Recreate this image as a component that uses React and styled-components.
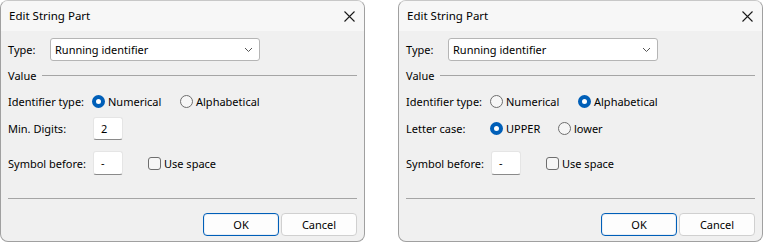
import React from 'react';
import styled, { createGlobalStyle } from 'styled-components';

const GlobalStyle = createGlobalStyle`
  body {
    margin: 0;
    padding: 0;
    background: #ffffff;
    font-family: 'Noto Sans', 'Liberation Sans', sans-serif;
    font-size: 11px;
    color: #000;
  }
`;

const Page = styled.div`
  display: flex;
  gap: 33px;
  width: 763px;
  height: 245px;
`;

const Window = styled.div`
  box-sizing: border-box;
  width: 365px;
  height: 242px;
  border: 1px solid #a0a0a0;
  border-top-color: #c8c8c8;
  border-radius: 8px;
  background: #f0f0f0;
  display: flex;
  flex-direction: column;
  overflow: hidden;
`;

const TitleBar = styled.div`
  height: 30px;
  flex: none;
  display: flex;
  align-items: center;
  justify-content: space-between;
  padding: 0 9px 0 8px;
  background: #f7f7f7;
`;

const Title = styled.span`
  font-size: 11.5px;
  line-height: 16px;
  margin-top: -1px;
`;

const Body = styled.div`
  flex: 1;
  display: flex;
  flex-direction: column;
  padding: 0 6px 0 6px;
`;

const Row = styled.div`
  display: flex;
  align-items: center;
  height: ${p => p.$h || 23}px;
  margin-top: ${p => p.$mt || 0}px;
  white-space: nowrap;
`;

const Label = styled.span`
  width: ${p => p.$w || 84}px;
  flex: none;
  padding-left: 1px;
`;

const Combo = styled.div`
  box-sizing: border-box;
  width: 210px;
  height: 23px;
  background: #fff;
  border: 1px solid #b5b5b5;
  border-radius: 3px;
  display: flex;
  align-items: center;
  justify-content: space-between;
  padding: 0 6px 0 4px;
`;

const GroupHead = styled.div`
  display: flex;
  align-items: center;
  gap: 6px;
  height: 14px;
  margin-top: 7px;
  padding-left: 1px;
  &::after {
    content: '';
    flex: 1;
    height: 1px;
    background: #a5a5a5;
    margin-right: 1px;
  }
`;

const Input = styled.div`
  box-sizing: border-box;
  width: 30px;
  height: ${p => p.$h || 23}px;
  background: #fff;
  border: 1px solid #e5e5e5;
  border-bottom-color: #8a8a8a;
  border-radius: 3px;
  padding: 3px 0 0 7px;
`;

const Choice = styled.label`
  display: flex;
  align-items: center;
  gap: 3px;
  width: ${p => (p.$w ? `${p.$w}px` : 'auto')};
  flex: none;
  margin-left: ${p => p.$ml || 0}px;
`;

const RadioDot = styled.span`
  box-sizing: border-box;
  width: 13px;
  height: 13px;
  border-radius: 50%;
  flex: none;
  background: ${p => (p.$on ? '#fff' : '#f6f6f6')};
  border: ${p => (p.$on ? '4px solid #005fb8' : '1px solid #6e6e6e')};
`;

const Check = styled.span`
  box-sizing: border-box;
  width: 13px;
  height: 13px;
  flex: none;
  border-radius: 3px;
  border: 1px solid #6e6e6e;
  background: #f6f6f6;
`;

const Separator = styled.div`
  height: 1px;
  background: #a5a5a5;
  margin: 23px 1px 0 1px;
`;

const Buttons = styled.div`
  display: flex;
  justify-content: flex-end;
  gap: 2px;
  margin-top: 14px;
  padding-right: 1px;
`;

const Button = styled.div`
  box-sizing: border-box;
  width: 76px;
  height: 23px;
  display: flex;
  align-items: center;
  justify-content: center;
  background: #fdfdfd;
  border-radius: 4px;
  border: 1px solid ${p => (p.$primary ? '#005fb8' : '#d0d0d0')};
  box-shadow: ${p => (p.$primary ? 'inset 0 0 0 1px #e8eef6' : 'none')};
`;

const Close = () => (
  <svg width="11" height="11" viewBox="0 0 11 11">
    <path d="M0.5 0.5 L10.5 10.5 M10.5 0.5 L0.5 10.5" stroke="#1a1a1a" strokeWidth="1.1" fill="none" />
  </svg>
);

const Chevron = () => (
  <svg width="9" height="6" viewBox="0 0 9 6">
    <path d="M1 1 L4.5 4.5 L8 1" stroke="#555" strokeWidth="1" fill="none" />
  </svg>
);

const Radio = ({ on, w, children }) => (
  <Choice $w={w}>
    <RadioDot $on={on} />
    {children}
  </Choice>
);

const Dialog = ({ alphabetical }) => (
  <Window>
    <TitleBar>
      <Title>Edit String Part</Title>
      <Close />
    </TitleBar>
    <Body>
      <Row $mt={7}>
        <Label $w={42}>Type:</Label>
        <Combo>
          <span>Running identifier</span>
          <Chevron />
        </Combo>
      </Row>
      <GroupHead>Value</GroupHead>
      <Row $mt={8}>
        <Label>Identifier type:</Label>
        <Radio on={!alphabetical} w={88}>Numerical</Radio>
        <Radio on={alphabetical}>Alphabetical</Radio>
      </Row>
      {alphabetical ? (
        <Row $mt={4}>
          <Label>Letter case:</Label>
          <Radio on w={68}>UPPER</Radio>
          <Radio>lower</Radio>
        </Row>
      ) : (
        <Row $mt={4}>
          <Label $w={85}>Min. Digits:</Label>
          <Input>2</Input>
        </Row>
      )}
      <Row $mt={11} $h={24}>
        <Label $w={85}>Symbol before:</Label>
        <Input $h={24}>-</Input>
        <Choice $ml={25}>
          <Check />
          Use space
        </Choice>
      </Row>
      <Separator />
      <Buttons>
        <Button $primary>OK</Button>
        <Button>Cancel</Button>
      </Buttons>
    </Body>
  </Window>
);

export default function App() {
  return (
    <>
      <GlobalStyle />
      <Page>
        <Dialog />
        <Dialog alphabetical />
      </Page>
    </>
  );
}
